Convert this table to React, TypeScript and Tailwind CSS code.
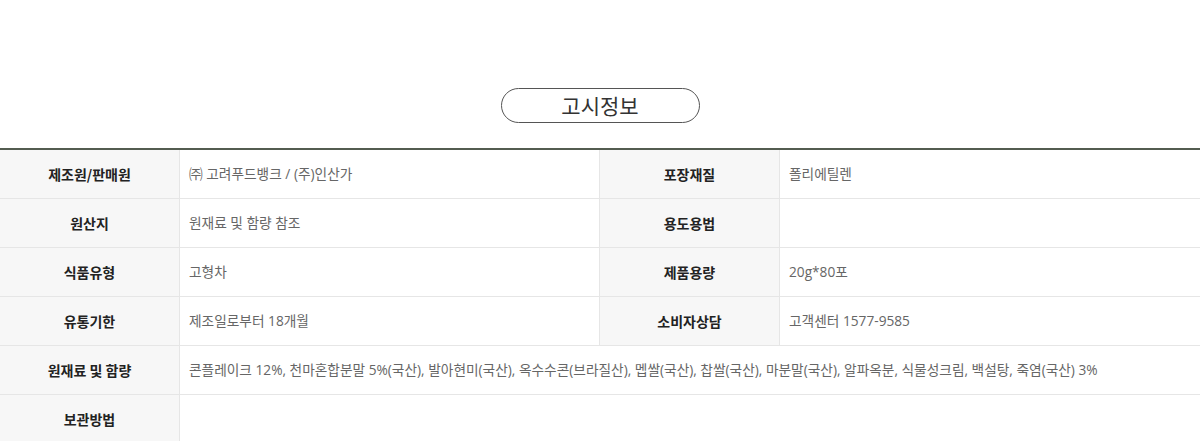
const rows: [string, string, string?, string?][] = [
  ["제조원/판매원", "㈜ 고려푸드뱅크 / (주)인산가", "포장재질", "폴리에틸렌"],
  ["원산지", "원재료 및 함량 참조", "용도용법", ""],
  ["식품유형", "고형차", "제품용량", "20g*80포"],
  ["유통기한", "제조일로부터 18개월", "소비자상담", "고객센터 1577-9585"],
  [
    "원재료 및 함량",
    "콘플레이크 12%, 천마혼합분말 5%(국산), 발아현미(국산), 옥수수콘(브라질산), 멥쌀(국산), 찹쌀(국산), 마분말(국산), 알파옥분, 식물성크림, 백설탕, 죽염(국산) 3%",
  ],
  ["보관방법", ""],
];

const font = "font-['Noto_Sans_CJK_KR','Noto_Sans',sans-serif]";
const valueCls = "flex items-center pl-[9px] text-[13.7px] text-[#666] font-['Open_Sans','Noto_Sans_CJK_KR',sans-serif]";

const App = () => {
  return (
    <div className={`w-[1200px] h-[441px] overflow-hidden bg-white ${font}`}>
      <div className="pt-[88px] flex justify-center">
        <div className="w-[199px] h-[35px] rounded-full border border-[#555] flex items-center justify-center text-[21px] text-[#333] leading-none">
          고시정보
        </div>
      </div>

      <div className="mt-[25px] border-t-2 border-[#535c50]">
        {rows.map(([l1, v1, l2, v2]) => (
          <div key={l1} className="flex h-[49px] border-b border-[#e6e6e6]">
            <div className="w-[180px] shrink-0 bg-[#f7f7f7] border-r border-[#e6e6e6] flex items-center justify-center text-[14px] font-bold text-[#222]">
              {l1}
            </div>
            {l2 === undefined ? (
              <div className={`flex-1 ${valueCls}`}>{v1}</div>
            ) : (
              <>
                <div className={`w-[420px] shrink-0 border-r border-[#e6e6e6] ${valueCls}`}>{v1}</div>
                <div className="w-[180px] shrink-0 bg-[#f7f7f7] border-r border-[#e6e6e6] flex items-center justify-center text-[14px] font-bold text-[#222]">
                  {l2}
                </div>
                <div className={`flex-1 ${valueCls}`}>{v2}</div>
              </>
            )}
          </div>
        ))}
      </div>
    </div>
  );
};

export default App;
